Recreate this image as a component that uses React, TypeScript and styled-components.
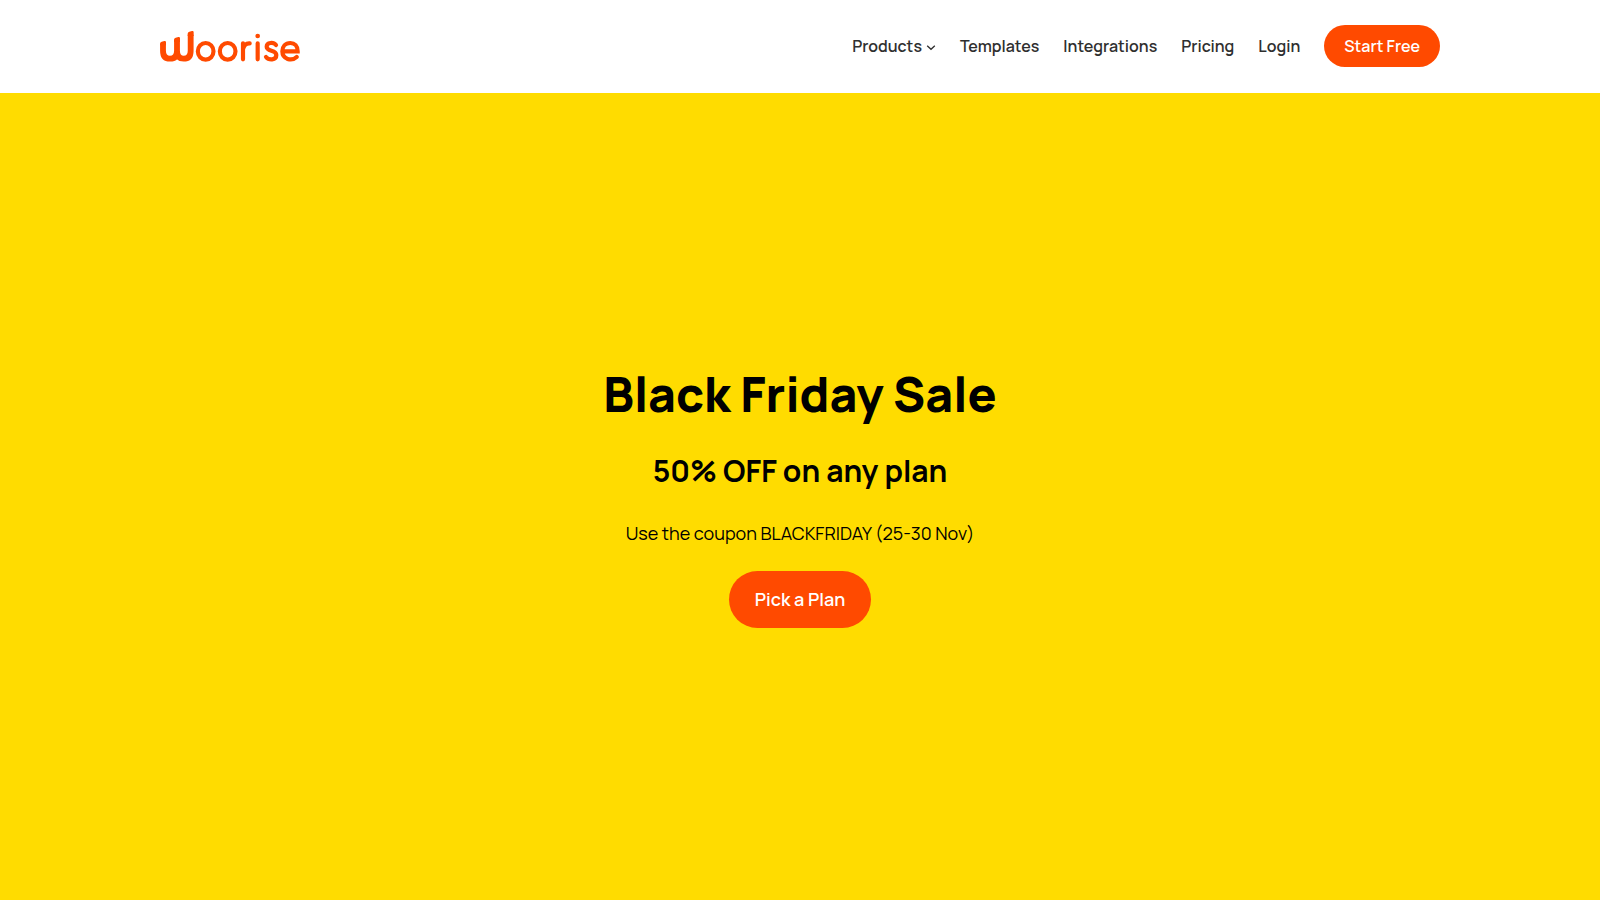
import React from "react";
import styled, { createGlobalStyle } from "styled-components";

const orange = "#ff4a00";

const GlobalStyle = createGlobalStyle`
  *, *::before, *::after { box-sizing: border-box; }
  body {
    margin: 0;
    background: #fff;
    color: #000;
    font-family: Manrope, Inter, "Liberation Sans", sans-serif;
  }
`;

const Page = styled.div`
  min-height: 100vh;
  display: flex;
  flex-direction: column;
`;

const Header = styled.header`
  padding: 25px 24px 26px;
  background: #fff;
`;

const HeaderInner = styled.div`
  max-width: 1280px;
  margin: 0 auto;
  display: flex;
  align-items: center;
  justify-content: space-between;
`;

const HomeLink = styled.a`
  display: flex;
  color: ${orange};
`;

const Nav = styled.nav`
  display: flex;
  align-items: center;
  gap: 24px;
`;

const NavLink = styled.a`
  color: #2f2f2f;
  font-size: 16px;
  line-height: 24px;
  font-weight: 600;
  text-decoration: none;
`;

const NavMenuButton = styled.button`
  display: flex;
  align-items: center;
  gap: 4px;
  padding: 0;
  border: 0;
  background: none;
  color: #2f2f2f;
  font: 600 16px/24px Manrope, Inter, "Liberation Sans", sans-serif;
  cursor: pointer;
`;

const PillLink = styled.a<{ $large?: boolean }>`
  padding: ${(p) => (p.$large ? "16px 26px" : "9px 20px")};
  border-radius: 32px;
  background: ${orange};
  color: #fff;
  font-size: ${(p) => (p.$large ? 18 : 16)}px;
  line-height: ${(p) => (p.$large ? 25 : 24)}px;
  font-weight: 600;
  text-decoration: none;
  white-space: nowrap;
`;

const Hero = styled.main`
  flex: 1;
  display: flex;
  flex-direction: column;
  align-items: center;
  justify-content: center;
  gap: 24px;
  padding: 24px;
  background: #ffdc00;
  text-align: center;
`;

const Title = styled.h1`
  margin: 0;
  font-size: 48px;
  line-height: 58px;
  font-weight: 800;
`;

const Subtitle = styled.h2`
  margin: 0;
  font-size: 30px;
  line-height: 48px;
  font-weight: 700;
`;

const Note = styled.p`
  margin: 0;
  font-size: 18px;
  line-height: 28px;
`;

const Logo = () => (
  <svg width="140" height="32" viewBox="30 30 420 96" fill="none" stroke="currentColor" role="img" aria-label="Woorise">
    <path d="M39 74V92Q39 116 60 116Q81 116 81 92V62M81 92Q81 116 101 116Q122 116 122 92V44" strokeWidth="17.5" />
    <path d="M30 76V71Q30 66 35 65L43 63Q48 62 48 67V76ZM72 66V59Q72 54 77 53L85 51Q90 50 90 55V66ZM113 48V41Q113 36 118 35L126 33Q131 32 131 37V48Z" fill="currentColor" stroke="none" />
    <g strokeWidth="12.5" strokeLinecap="round">
      <ellipse cx="167" cy="94" rx="23.5" ry="25" />
      <ellipse cx="233" cy="94" rx="23.5" ry="25" />
      <path d="M279 118V70M279 88Q283 69 299 70M323 70V118" />
      <path d="M378 75C371 66 350 66 350 80C350 96 379 88 379 105C379 122 356 121 348 111" />
      <path d="M398 94H443C443 78 434 69 421 69C406 69 397 80 397 94C397 118 425 125 440 111" />
    </g>
    <circle cx="323" cy="48" r="7" fill="currentColor" stroke="none" />
  </svg>
);

const Chevron = () => (
  <svg width="10" height="10" viewBox="0 0 10 10" fill="none" stroke="currentColor" strokeWidth="1.3" aria-hidden="true">
    <path d="M1.2 4.7L5 8.3L8.8 4.7" />
  </svg>
);

export default function App() {
  return (
    <Page>
      <GlobalStyle />
      <Header>
        <HeaderInner>
          <HomeLink href="#home">
            <Logo />
          </HomeLink>
          <Nav aria-label="Main">
            <NavMenuButton type="button" aria-haspopup="true">
              Products
              <Chevron />
            </NavMenuButton>
            <NavLink href="#templates">Templates</NavLink>
            <NavLink href="#integrations">Integrations</NavLink>
            <NavLink href="#pricing">Pricing</NavLink>
            <NavLink href="#login">Login</NavLink>
            <PillLink href="#signup">Start Free</PillLink>
          </Nav>
        </HeaderInner>
      </Header>
      <Hero>
        <Title>Black Friday Sale</Title>
        <Subtitle>50% OFF on any plan</Subtitle>
        <Note>Use the coupon BLACKFRIDAY (25-30 Nov)</Note>
        <PillLink href="#pricing" $large>
          Pick a Plan
        </PillLink>
      </Hero>
    </Page>
  );
}
